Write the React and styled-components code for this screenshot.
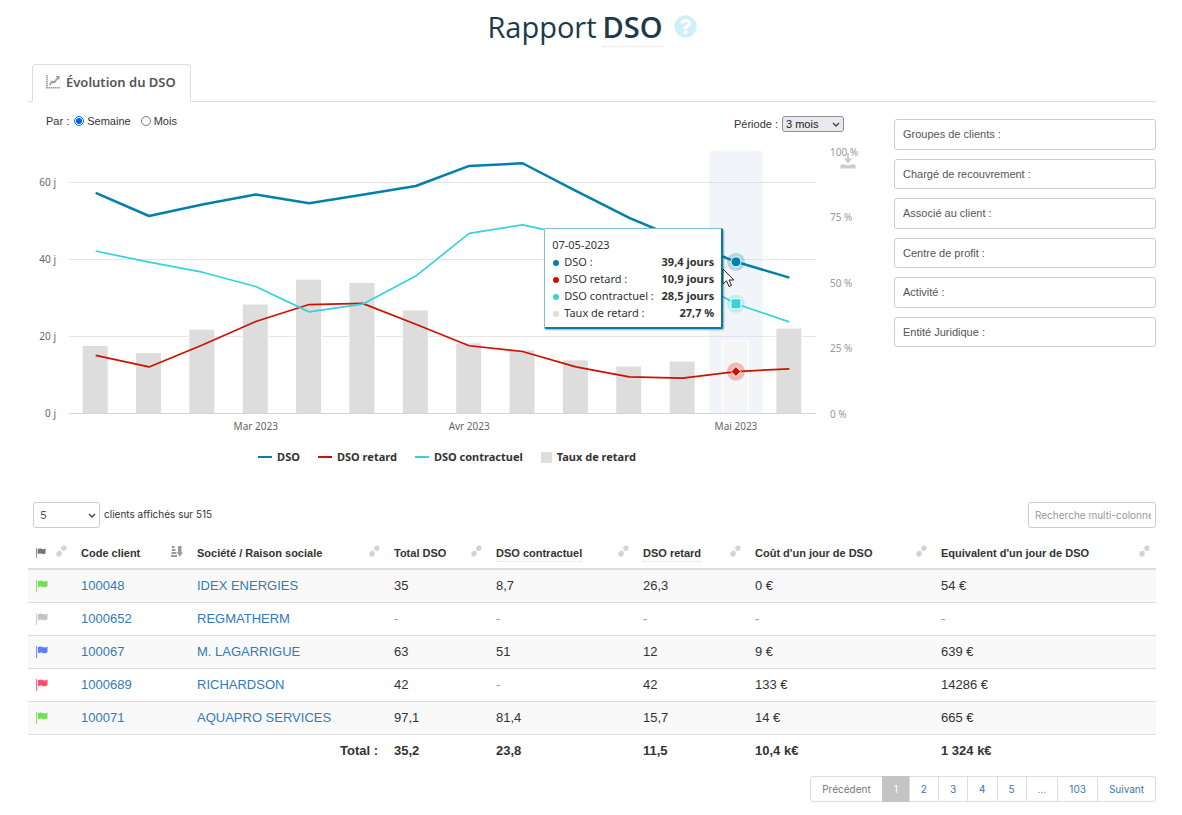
import React, { useState } from 'react';
import styled, { createGlobalStyle } from 'styled-components';
import { FaQuestionCircle } from 'react-icons/fa';

const GlobalStyle = createGlobalStyle`
  * {
    box-sizing: border-box;
  }

  body {
    margin: 0;
    background: #fff;
    color: #333;
    font-family: "Liberation Sans", Arial, sans-serif;
    font-size: 13px;
    line-height: 20px;
  }

  button, input, select {
    font-family: inherit;
  }
`;

const Page = styled.main`
  padding: 8px 26px 12px 28px;
`;

const Title = styled.h1`
  display: flex;
  justify-content: center;
  align-items: flex-start;
  margin: 0 0 17px;
  color: #1c3a4a;
  font: 400 29px/38px "Open Sans", "Noto Sans", sans-serif;

  abbr {
    margin: 0 11px 0 6px;
    font-weight: 600;
    text-decoration: none;
    border-bottom: 1px dotted #ddd;
  }
`;

const HelpButton = styled.button`
  display: flex;
  margin-top: 7px;
  padding: 0;
  border: 0;
  background: none;
  color: #d0effb;
  font-size: 23px;
`;

const Tabs = styled.div`
  display: flex;
  padding-left: 4px;
  border-bottom: 1px solid #ddd;
`;

const Tab = styled.button`
  display: flex;
  align-items: center;
  gap: 6px;
  height: 38px;
  margin-bottom: -1px;
  padding: 0 14px 3px 13px;
  border: 1px solid #ddd;
  border-bottom-color: #fff;
  border-radius: 4px 4px 0 0;
  background: #fff;
  color: #555;
  font: 600 13px/20px "Noto Sans", sans-serif;
`;

const Report = styled.section`
  display: grid;
  grid-template-columns: minmax(0, 1fr) 262px;
  gap: 28px;
`;

const Controls = styled.div`
  display: flex;
  justify-content: space-between;
  height: 42px;
  padding: 9px 22px 0 18px;
  font-size: 11px;
`;

const Options = styled.div`
  display: flex;
  align-items: flex-start;
  gap: 5px;
  line-height: 20px;
`;

const RadioLabel = styled.label`
  display: flex;
  align-items: center;
  gap: 3px;
  margin-right: 5px;

  input {
    width: 10px;
    height: 10px;
    margin: 0;
    accent-color: #0060df;
  }
`;

const Period = styled.label`
  display: flex;
  align-items: center;
  gap: 4px;
  height: 25px;
`;

const SelectBox = styled.span`
  position: relative;
  display: inline-flex;
  width: ${props => props.$width}px;

  svg {
    position: absolute;
    right: 4px;
    top: 50%;
    margin-top: -2px;
    pointer-events: none;
  }

  select {
    width: 100%;
    height: ${props => props.$height}px;
    padding: 0 ${props => (props.$plain ? 6 : 3)}px;
    appearance: none;
    border: 1px solid ${props => (props.$plain ? '#ccc' : '#8f8f9d')};
    border-radius: 3px;
    background: ${props => (props.$plain ? '#fff' : '#e9e9ed')};
    color: ${props => (props.$plain ? '#555' : '#222')};
    font-size: 11px;
  }
`;

const ChartArea = styled.div`
  position: relative;
`;

const Plot = styled.svg`
  display: block;
  width: 100%;
  height: auto;
`;

const AxisText = styled.text`
  fill: ${props => (props.$light ? '#999' : '#666')};
  font: 10px "Noto Sans", sans-serif;
`;

const DownloadButton = styled.button`
  position: absolute;
  top: 3%;
  right: 10px;
  padding: 0;
  border: 0;
  background: none;
  line-height: 0;
`;

const Tooltip = styled.div`
  position: absolute;
  left: 61.6%;
  top: 28.5%;
  width: 179px;
  padding: 7px 7px 6px;
  border: 1px solid #7fc0d6;
  border-right: 2px solid #0080a8;
  border-bottom: 2px solid #0080a8;
  border-radius: 2px;
  background: #fff;
  box-shadow: 1px 1px 2px rgba(0, 0, 0, 0.35);
  font: 11px/17px "Noto Sans", sans-serif;
`;

const TooltipRow = styled.div`
  display: flex;
  align-items: center;
  white-space: nowrap;

  strong {
    margin-left: auto;
  }
`;

const Dot = styled.span`
  width: 6px;
  height: 6px;
  margin: 2px 5px 0 1px;
  border-radius: 50%;
  background: ${props => props.$color};
`;

const Cursor = styled.svg`
  position: absolute;
  left: 82.8%;
  top: 42%;
`;

const Legend = styled.div`
  display: flex;
  justify-content: center;
  gap: 18px;
  padding: 8px 0 0;
`;

const LegendItem = styled.button`
  display: flex;
  align-items: center;
  gap: 5px;
  padding: 0;
  border: 0;
  background: none;
  color: #333;
  font: 700 11px/20px "Noto Sans", sans-serif;
`;

const Swatch = styled.span`
  width: ${props => (props.$square ? 11 : 14)}px;
  height: ${props => (props.$square ? 11 : 2)}px;
  background: ${props => props.$color};
`;

const Filters = styled.div`
  display: grid;
  grid-template-rows: repeat(6, 1fr);
  gap: 9px;
  height: 228px;
  margin-top: 17px;
`;

const FilterInput = styled.input`
  width: 100%;
  min-height: 0;
  padding: 0 8px;
  border: 1px solid #ccc;
  border-radius: 3px;
  color: #555;
  font-size: 11px;

  &::placeholder {
    color: #555;
    opacity: 1;
  }
`;

const TableBar = styled.div`
  display: flex;
  justify-content: space-between;
  margin-top: 35px;
  padding-left: 5px;
`;

const PageSize = styled.label`
  display: flex;
  gap: 4px;
  font: 10px/24px Inter, "Liberation Sans", sans-serif;
`;

const Search = styled.input`
  width: 128px;
  height: 26px;
  padding: 0 4px 0 6px;
  border: 1px solid #ccc;
  border-radius: 3px;
  font: 10px Inter, "Liberation Sans", sans-serif;

  &::placeholder {
    color: #999;
  }
`;

const Table = styled.table`
  width: 100%;
  margin-top: 8px;
  table-layout: fixed;
  border-collapse: collapse;
`;

const Col = styled.col`
  width: ${props => props.$width}px;
`;

const HeadCell = styled.th`
  height: 33px;
  padding: 2px 6px 0 8px;
  border-bottom: 2px solid #ddd;
  font-size: 11px;
  line-height: 16px;
  text-align: left;
  white-space: nowrap;
`;

const HeadInner = styled.div`
  display: flex;
  align-items: center;
  justify-content: space-between;

  abbr {
    text-decoration: none;
    border-bottom: 1px dotted #ddd;
    margin-bottom: -1px;
  }
`;

const SortButton = styled.button`
  margin: -4px 0 0;
  padding: 0;
  border: 0;
  background: none;
  line-height: 0;
`;

const Row = styled.tr`
  background: ${props => (props.$striped ? '#f9f9f9' : '#fff')};
  border-bottom: 1px solid #ddd;
`;

const Cell = styled.td`
  height: 33px;
  padding: 0 8px;
  color: ${props => (props.$muted ? '#999' : '#333')};
  white-space: nowrap;

  svg {
    display: block;
  }

  a {
    color: #337ab7;
    text-decoration: none;
  }
`;

const TotalCell = styled(Cell)`
  height: 34px;
  font-weight: 700;
  text-align: ${props => (props.$right ? 'right' : 'left')};
`;

const Pagination = styled.nav`
  display: flex;
  justify-content: flex-end;
  margin-top: 8px;
`;

const PageButton = styled.button`
  height: 26px;
  margin-left: -1px;
  padding: 0 11px;
  border: 1px solid ${props => (props.$active ? '#c4c4c4' : '#ddd')};
  background: ${props => (props.$active ? '#c4c4c4' : '#fff')};
  color: ${props => (props.$active ? '#fff' : props.$muted ? '#777' : '#337ab7')};
  font: 10px Inter, "Liberation Sans", sans-serif;

  &:first-child {
    border-radius: 3px 0 0 3px;
  }

  &:last-child {
    border-radius: 0 3px 3px 0;
  }
`;

const COLORS = {
  dso: '#0080ab',
  retard: '#cc1100',
  contractuel: '#35d3da',
  taux: '#dddddd',
};

const DSO = [57.3, 51.3, 54.3, 56.9, 54.6, 56.8, 59.1, 64.3, 65, 57.8, 50.8, 45, 39.4, 35.3];
const RETARD = [15.1, 12.1, 17.8, 23.9, 28.3, 28.6, 23.2, 17.6, 16.1, 12.1, 9.5, 9.2, 10.9, 11.6];
const CONTRACTUEL = [42.2, 39.3, 36.7, 33, 26.4, 28.4, 35.7, 46.8, 49, 46, 41, 36, 28.5, 23.8];
const TAUX = [26, 23.3, 32.2, 41.8, 51.3, 50, 39.5, 27, 24.3, 20.5, 18.1, 20, 27.7, 32.6];

const PLOT = { left: 41, right: 788, top: 7, bottom: 269.5 };
const STEP = (PLOT.right - PLOT.left) / DSO.length;
const HOVERED = 12;

const getX = (index) => PLOT.left + STEP * (index + 0.5);
const getDayY = (days) => PLOT.bottom - days * 3.85;
const getRateY = (rate) => PLOT.bottom - rate * 2.62;
const getPoints = (values) => values.map((value, index) => `${getX(index)},${getDayY(value)}`).join(' ');

const TOOLTIP_ROWS = [
  { label: 'DSO :', value: '39,4 jours', color: COLORS.dso },
  { label: 'DSO retard :', value: '10,9 jours', color: COLORS.retard },
  { label: 'DSO contractuel :', value: '28,5 jours', color: COLORS.contractuel },
  { label: 'Taux de retard :', value: '27,7 %', color: COLORS.taux },
];

const LEGEND = [
  { label: 'DSO', color: COLORS.dso },
  { label: 'DSO retard', color: COLORS.retard },
  { label: 'DSO contractuel', color: COLORS.contractuel },
  { label: 'Taux de retard', color: COLORS.taux, square: true },
];

const FILTERS = [
  'Groupes de clients :',
  'Chargé de recouvrement :',
  'Associé au client :',
  'Centre de profit :',
  'Activité :',
  'Entité Juridique :',
];

const COLUMNS = [
  { key: 'flag', width: 45 },
  { key: 'code', title: 'Code client', width: 116, sorted: true },
  { key: 'name', title: 'Société / Raison sociale', width: 197 },
  { key: 'total', title: 'Total DSO', width: 102 },
  { key: 'contractuel', title: 'DSO contractuel', width: 147, hint: true },
  { key: 'retard', title: 'DSO retard', width: 112, hint: true },
  { key: 'cost', title: "Coût d'un jour de DSO", width: 186 },
  { key: 'equivalent', title: "Equivalent d'un jour de DSO", width: 223 },
];

const CLIENTS = [
  { flag: '#6fe052', code: '100048', name: 'IDEX ENERGIES', values: ['35', '8,7', '26,3', '0 €', '54 €'] },
  { flag: '#c4c4c4', code: '1000652', name: 'REGMATHERM', values: ['-', '-', '-', '-', '-'] },
  { flag: '#5c7cfa', code: '100067', name: 'M. LAGARRIGUE', values: ['63', '51', '12', '9 €', '639 €'] },
  { flag: '#ff4d6d', code: '1000689', name: 'RICHARDSON', values: ['42', '-', '42', '133 €', '14286 €'] },
  { flag: '#6fe052', code: '100071', name: 'AQUAPRO SERVICES', values: ['97,1', '81,4', '15,7', '14 €', '665 €'] },
];

const TOTALS = ['35,2', '23,8', '11,5', '10,4 k€', '1 324 k€'];
const PAGES = ['Précédent', '1', '2', '3', '4', '5', '...', '103', 'Suivant'];

const FlagIcon = ({ color, small }) => (
  <svg width={small ? 10 : 12} height={small ? 10 : 12} viewBox="0 0 12 12" fill={color}>
    <path d="M0 0h1.2v12H0z" opacity="0.8" />
    <path d="M2 1.2C3.6.2 5 .3 6.6 1c1.6.7 3.2.5 4.900-.5v5.800c-1.600 1.200-3.300 1.300-4.900.6C5 6.200 3.600 6.300 2 7.400z" />
  </svg>
);

const SortIcon = () => (
  <svg width="11" height="12" viewBox="0 0 11 12" fill="#d3d3d3">
    <path d="M5 2.200 7.800.2 10.700 1.600 10.200 4.700 7.600 6.200 5.600 5.200z" />
    <path d="M.6 7.200 3.200 5.400 5.400 6.600 5.900 9.400 3.200 11.900.3 10.600z" />
  </svg>
);

const SortedIcon = () => (
  <svg width="12" height="11" viewBox="0 0 12 11" fill="#999">
    <path d="M1 0h2.500v2H1zM1 3h3.500v2H1zM.5 6h5v2h-5zM0 9h6v2H0z" />
    <path d="M7 0h3.500v6.500H12L8.800 10.500 5.800 6.500H7z" />
  </svg>
);

const TrendIcon = () => (
  <svg width="14" height="14" viewBox="0 0 14 14" fill="none" stroke="#999">
    <path d="M1 0v13.500M1 12.800h13" strokeWidth="1.500" strokeDasharray="1.500 .5" />
    <path d="M3.500 10 6 6.800 8.500 7 12.500 2" strokeWidth="1.800" />
    <path d="M10 1.500h3v3" strokeWidth="1.200" />
  </svg>
);

const Chevron = () => (
  <svg width="8" height="6" viewBox="0 0 8 6" fill="none" stroke="#444" strokeWidth="1.400">
    <path d="M1 1l3 3 3-3" />
  </svg>
);

const Chart = () => (
  <ChartArea>
    <Plot viewBox="0 0 838 295" role="img" aria-label="Évolution du DSO">
      {[20, 40, 60].map(days => (
        <line key={days} x1={PLOT.left} x2={PLOT.right} y1={getDayY(days)} y2={getDayY(days)} stroke="#e6e6e6" />
      ))}
      <rect
        x={getX(HOVERED) - STEP / 2}
        y={PLOT.top}
        width={STEP}
        height={PLOT.bottom - PLOT.top}
        fill="#ccd6eb"
        opacity="0.28"
      />
      {TAUX.map((rate, index) => (
        <rect
          key={index}
          x={getX(index) - 13.5}
          y={getRateY(rate)}
          width="26"
          height={PLOT.bottom - getRateY(rate)}
          fill={index === HOVERED ? '#f5f5f5' : COLORS.taux}
          stroke="#fff"
        />
      ))}
      <line x1={PLOT.left} x2={PLOT.right} y1={PLOT.bottom} y2={PLOT.bottom} stroke="#ccd6eb" />
      <g fill="none" strokeLinejoin="round">
        <polyline points={getPoints(DSO)} stroke={COLORS.dso} strokeWidth="2.500" />
        <polyline points={getPoints(RETARD)} stroke={COLORS.retard} strokeWidth="1.700" />
        <polyline points={getPoints(CONTRACTUEL)} stroke={COLORS.contractuel} strokeWidth="1.700" />
      </g>
      <g transform={`translate(${getX(HOVERED)} ${getDayY(39.4)})`} fill={COLORS.dso}>
        <circle r="9" opacity="0.25" />
        <circle r="5" stroke="#fff" />
      </g>
      <g transform={`translate(${getX(HOVERED)} ${getDayY(28.5)})`} fill={COLORS.contractuel}>
        <circle r="9" opacity="0.25" />
        <rect x="-5" y="-5" width="10" height="10" stroke="#fff" />
      </g>
      <g transform={`translate(${getX(HOVERED)} ${getDayY(10.9)})`} fill={COLORS.retard}>
        <circle r="9" opacity="0.25" />
        <path d="M0-5 5 0 0 5-5 0z" stroke="#fff" />
      </g>
      {[0, 20, 40, 60].map(days => (
        <AxisText key={days} x="28" y={getDayY(days) + 3} textAnchor="end">{days} j</AxisText>
      ))}
      {[0, 25, 50, 75, 100].map(rate => (
        <AxisText key={rate} x="802" y={getRateY(rate) + 4} $light>{rate} %</AxisText>
      ))}
      <AxisText x={getX(3)} y="286" textAnchor="middle">Mar 2023</AxisText>
      <AxisText x={getX(7)} y="286" textAnchor="middle">Avr 2023</AxisText>
      <AxisText x={getX(12)} y="286" textAnchor="middle">Mai 2023</AxisText>
    </Plot>
    <DownloadButton aria-label="Télécharger">
      <svg width="16" height="16" viewBox="0 0 16 16" fill="#ccc">
        <path d="M7 0h2v5.500h3L8 10.500 4 5.500h3zM.5 11.500H5l3 1 3-1h4.500v4H.5z" />
      </svg>
    </DownloadButton>
    <Tooltip>
      <div>07-05-2023</div>
      {TOOLTIP_ROWS.map(row => (
        <TooltipRow key={row.label}>
          <Dot $color={row.color} />
          <span>{row.label}</span>
          <strong>{row.value}</strong>
        </TooltipRow>
      ))}
    </Tooltip>
    <Cursor width="13" height="20" viewBox="0 0 13 20" fill="#fff" stroke="#222">
      <path d="M1 1v15l3.500-3.200L7 18.500l2.500-1.200L7 12h4.800z" />
    </Cursor>
  </ChartArea>
);

const ClientTable = () => (
  <Table>
    <colgroup>
      {COLUMNS.map(column => <Col key={column.key} $width={column.width} />)}
    </colgroup>
    <thead>
      <tr>
        {COLUMNS.map(column => (
          <HeadCell key={column.key}>
            <HeadInner>
              {column.title
                ? (column.hint ? <abbr>{column.title}</abbr> : <span>{column.title}</span>)
                : <FlagIcon color="#777" small />}
              <SortButton aria-label="Trier">
                {column.sorted ? <SortedIcon /> : <SortIcon />}
              </SortButton>
            </HeadInner>
          </HeadCell>
        ))}
      </tr>
    </thead>
    <tbody>
      {CLIENTS.map((client, index) => (
        <Row key={client.code} $striped={index % 2 === 0}>
          <Cell><FlagIcon color={client.flag} /></Cell>
          <Cell><a href="#client">{client.code}</a></Cell>
          <Cell><a href="#client">{client.name}</a></Cell>
          {client.values.map((value, position) => (
            <Cell key={position} $muted={value === '-'}>{value}</Cell>
          ))}
        </Row>
      ))}
    </tbody>
    <tfoot>
      <tr>
        <TotalCell colSpan="3" $right>Total :</TotalCell>
        {TOTALS.map(total => <TotalCell key={total}>{total}</TotalCell>)}
      </tr>
    </tfoot>
  </Table>
);

const App = () => {
  const [step, setStep] = useState('week');
  const [page, setPage] = useState('1');

  return (
    <>
      <GlobalStyle />
      <Page>
        <Title>
          Rapport <abbr>DSO</abbr>
          <HelpButton aria-label="Aide"><FaQuestionCircle /></HelpButton>
        </Title>
        <Tabs>
          <Tab><TrendIcon />Évolution du DSO</Tab>
        </Tabs>
        <Report>
          <div>
            <Controls>
              <Options>
                <span>Par :</span>
                <RadioLabel>
                  <input type="radio" name="step" checked={step === 'week'} onChange={() => setStep('week')} />
                  Semaine
                </RadioLabel>
                <RadioLabel>
                  <input type="radio" name="step" checked={step === 'month'} onChange={() => setStep('month')} />
                  Mois
                </RadioLabel>
              </Options>
              <Period>
                Période :
                <SelectBox $width={62} $height={16}>
                  <select>
                    <option>3 mois</option>
                  </select>
                  <Chevron />
                </SelectBox>
              </Period>
            </Controls>
            <Chart />
            <Legend>
              {LEGEND.map(item => (
                <LegendItem key={item.label}>
                  <Swatch $color={item.color} $square={item.square} />
                  {item.label}
                </LegendItem>
              ))}
            </Legend>
          </div>
          <Filters>
            {FILTERS.map(filter => (
              <FilterInput key={filter} placeholder={filter} aria-label={filter} />
            ))}
          </Filters>
        </Report>
        <TableBar>
          <PageSize>
            <SelectBox $width={67} $height={26} $plain>
              <select>
                <option>5</option>
              </select>
              <Chevron />
            </SelectBox>
            clients affichés sur 515
          </PageSize>
          <Search placeholder="Recherche multi-colonnes" aria-label="Recherche multi-colonnes" />
        </TableBar>
        <ClientTable />
        <Pagination>
          {PAGES.map(label => (
            <PageButton
              key={label}
              $active={label === page}
              $muted={label === 'Précédent' || label === '...'}
              onClick={() => setPage(label)}
            >
              {label}
            </PageButton>
          ))}
        </Pagination>
      </Page>
    </>
  );
};

export default App;
